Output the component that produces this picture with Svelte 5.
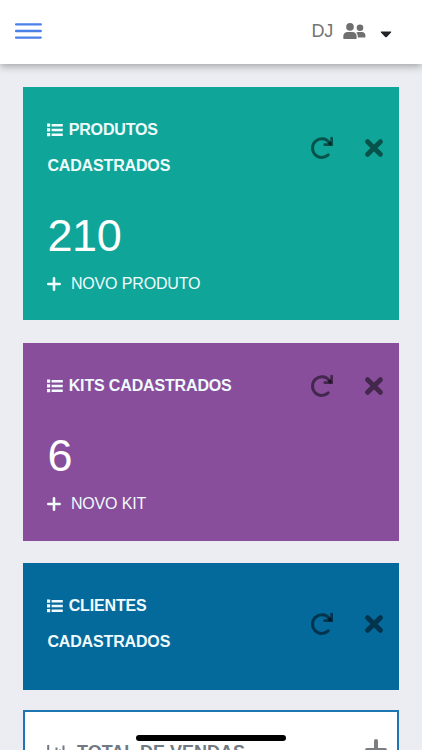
<script>
  const cards = [
    { title: 'PRODUTOS CADASTRADOS', tone: 'teal', count: '210', action: 'NOVO PRODUTO' },
    { title: 'KITS CADASTRADOS', tone: 'purple', count: '6', action: 'NOVO KIT' },
    { title: 'CLIENTES CADASTRADOS', tone: 'blue' }
  ];
</script>

<div class="screen">
  <header>
    <button class="menu" aria-label="Menu">
      <svg viewBox="0 0 27 18" width="27" height="18">
        <path d="M1 2.4h24.8M1 9h24.8M1 15.6h24.8" stroke="#4a80e8" stroke-width="2.3" stroke-linecap="round" />
      </svg>
    </button>
    <div class="user">
      <span class="name">DJ</span>
      <svg class="users" viewBox="0 0 23 16" width="23" height="16" fill="#6f6f6f">
        <circle cx="7" cy="3.9" r="3.8" />
        <path d="M0.3 15.6v-2.2q0-4.5 4.6-4.5h4.2q4.5 0 4.5 4.5v2.2q0 .3-.5.3H.8q-.5 0-.5-.3z" />
        <circle cx="17" cy="4.8" r="3.3" />
        <path d="M13.3 9.5q.9-.5 2.2-.5h3.1q3.9 0 3.9 4.4 0 1-.9 1h-6.8v-1.1q0-2.4-1.5-3.8z" />
      </svg>
      <svg class="caret" viewBox="0 0 12 7" width="12" height="7">
        <path d="M1.3.5h9.4q1 .2.3 1.1L6.8 6q-.8.7-1.6 0L1 1.6Q.3.7 1.3.5z" fill="#202226" />
      </svg>
    </div>
  </header>

  <main>
    {#each cards as card}
      <section class="card {card.tone}">
        <div class="head">
          <h2>
            <svg class="list" viewBox="0 0 16 14" width="16" height="14" fill="currentColor">
              <path d="M0 .5h3.2v3.2H0zM0 5.3h3.2v3.2H0zM0 10.1h3.2v3.2H0zM4.6 1h11.2v2.4H4.6zM4.6 5.8h11.2v2.4H4.6zM4.6 10.6h11.2V13H4.6z" />
            </svg>
            {card.title}
          </h2>
          <div class="tools">
            <svg viewBox="0 0 24 24" width="24" height="24" fill="none" stroke="currentColor">
              <path d="M18.2 18.9A9.3 9.3 0 1 1 18.9 6.1L20.3 8" stroke-width="3" stroke-linecap="round" />
              <path d="M20.3 1.2q2.7-1 2.7 1V10h-8.7q-1-.2-.9-1.9 0-.8 1-.8h3.3L20.3 5z" fill="currentColor" stroke="none" />
            </svg>
            <svg viewBox="0 0 20 20" width="20" height="20">
              <path d="M3.6 3.7l12.8 12.6M16.4 3.7L3.6 16.3" stroke="currentColor" stroke-width="5" stroke-linecap="round" />
            </svg>
          </div>
        </div>
        {#if card.count}
          <div class="count">{card.count}</div>
          <div class="action">
            <svg viewBox="0 0 14 14" width="14" height="14">
              <path d="M7 1.3v11.4M1.3 7h11.4" stroke="currentColor" stroke-width="2.6" stroke-linecap="round" />
            </svg>
            <span>{card.action}</span>
          </div>
        {/if}
      </section>
    {/each}

    <section class="sales">
      <svg class="chart" viewBox="0 0 20 16" width="20" height="16" fill="none" stroke="#717a83">
        <path d="M1.2 1v13h17.5" stroke-width="2" />
        <path d="M6 7v5M9.5 3.5V12M13 5.5V12M16.5 1.5V12" stroke-width="2" />
      </svg>
      <h2>TOTAL DE VENDAS</h2>
      <svg class="plus" viewBox="0 0 22 22" width="22" height="22">
        <path d="M11 2v18M2 11h18" stroke="#7c7f82" stroke-width="4" stroke-linecap="round" />
      </svg>
    </section>
  </main>
  <div class="home"></div>
</div>

<style>
  :global(body) {
    margin: 0;
  }
  .screen {
    position: relative;
    height: 750px;
    overflow: hidden;
    background: #ecedf2;
    font-family: "Liberation Sans", Arial, sans-serif;
  }
  header {
    position: relative;
    box-sizing: border-box;
    height: 64px;
    padding: 0 30px 2px 14.5px;
    display: flex;
    align-items: center;
    justify-content: space-between;
    background: #fff;
    box-shadow: 0 2px 8px rgba(0, 0, 0, 0.34);
  }
  .menu {
    padding: 0;
    border: 0;
    background: none;
  }
  .menu svg {
    display: block;
  }
  .user {
    display: flex;
    align-items: center;
  }
  .name {
    font-size: 18px;
    line-height: 22px;
    letter-spacing: -0.2px;
    color: #737373;
  }
  .users {
    margin-left: 10px;
  }
  .caret {
    margin: 7px 0 0 14px;
  }
  main {
    padding: 23px 23px 0;
  }
  .card {
    box-sizing: border-box;
    padding: 25px 15.5px 18px 24.4px;
    margin-bottom: 23px;
    color: #f0fbfd;
  }
  .teal {
    height: 233px;
    background: #0fa699;
  }
  .purple {
    height: 197.5px;
    margin-bottom: 22.5px;
    background: #884e9b;
  }
  .blue {
    height: 127px;
    margin-bottom: 20px;
    background: #04699b;
  }
  .head {
    display: flex;
    align-items: center;
    justify-content: space-between;
  }
  h2 {
    margin: 0;
    font-size: 16px;
    line-height: 36px;
    font-weight: 700;
    letter-spacing: -0.15px;
  }
  .head h2 {
    width: 200px;
  }
  .teal h2,
  .blue h2 {
    width: 150px;
  }
  .list {
    margin-right: 1px;
    vertical-align: -1.5px;
  }
  .tools {
    display: flex;
    align-items: center;
    gap: 30px;
    margin-top: -1px;
    color: rgba(0, 0, 0, 0.5);
  }
  .tools svg {
    display: block;
  }
  .count {
    margin-top: 26px;
    font-size: 45px;
    line-height: 52px;
    letter-spacing: -0.3px;
    color: #fff;
  }
  .action {
    display: flex;
    align-items: center;
    gap: 9.5px;
    margin-top: 12px;
    font-size: 16px;
    line-height: 20px;
    letter-spacing: -0.15px;
  }
  .sales {
    box-sizing: border-box;
    height: 90px;
    padding: 21px 10px 0 22px;
    border: 2px solid #1d76b2;
    display: flex;
    align-items: flex-start;
    background: #fff;
  }
  .sales h2 {
    margin: 1px 0 0 10px;
    flex: 1;
    font-size: 18px;
    letter-spacing: 0;
    color: #717a83;
  }
  .chart {
    margin-top: 11px;
  }
  .plus {
    margin-top: 6px;
  }
  .home {
    position: absolute;
    left: 136px;
    top: 735px;
    width: 150px;
    height: 6px;
    border-radius: 3px;
    background: #000;
  }
</style>
